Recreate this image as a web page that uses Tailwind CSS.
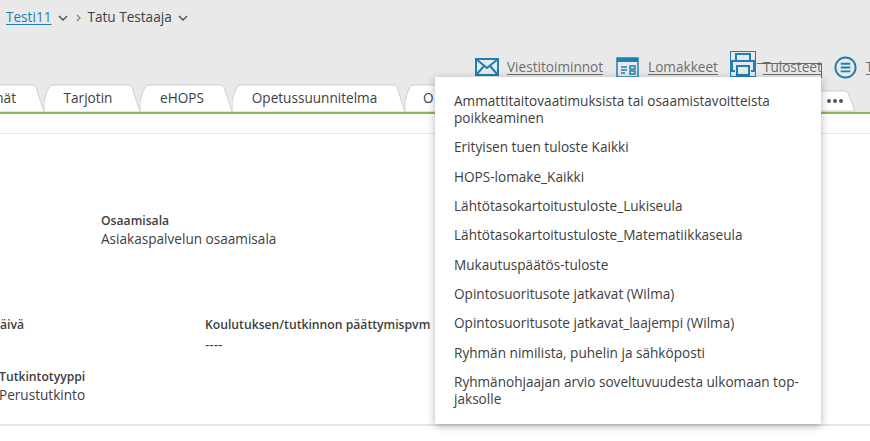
<!DOCTYPE html>
<html lang="fi">
<head>
  <meta charset="UTF-8">
  <title>Tulosteet</title>
  <script src="https://cdn.jsdelivr.net/npm/@tailwindcss/browser@4"></script>
</head>
<body class="w-[870px] h-[441px] overflow-hidden bg-white font-['Open_Sans',sans-serif] text-[13.6px] text-[#404040]">
<div class="relative w-[870px] h-[441px] overflow-hidden">

  <!-- header -->
  <div class="h-[112px] bg-[#e9e9e9] flex flex-col">
    <div class="h-[35px] pl-[6px] flex items-center">
      <a class="text-[#1f7fb0] underline underline-offset-2">Testi11</a>
      <svg class="ml-[7px] w-[10px] h-[6px]" viewBox="0 0 10 6" fill="none" stroke="#555" stroke-width="1.5"><path d="M1 1l4 4 4-4"/></svg>
      <svg class="ml-[8px] w-[5px] h-[8px]" viewBox="0 0 5 8" fill="none" stroke="#888" stroke-width="1.3"><path d="M1 1l3 3-3 3"/></svg>
      <span class="ml-[6px]">Tatu Testaaja</span>
      <svg class="ml-[6px] w-[10px] h-[6px]" viewBox="0 0 10 6" fill="none" stroke="#555" stroke-width="1.5"><path d="M1 1l4 4 4-4"/></svg>
    </div>

    <div class="h-[49px] flex items-end pl-[475px] whitespace-nowrap text-[#6e6e6e]">
      <div class="flex items-center h-[30px] mb-[2px]">
        <svg class="w-[24px] h-[20px]" viewBox="0 0 24 20" fill="none" stroke="#1f7fb0" stroke-width="2"><rect x="1" y="2" width="22" height="16"/><path d="M1 2l11 9 11-9M1 18l8-9M23 18l-8-9"/></svg>
        <span class="ml-[8px] underline underline-offset-2">Viestitoiminnot</span>
        <svg class="ml-[13px] w-[23px] h-[21px]" viewBox="0 0 23 21" fill="none" stroke="#1f7fb0" stroke-width="1.5"><rect x="1" y="1" width="21" height="19"/><path d="M1 3h21" stroke-width="4"/><path d="M5 10h6M5 13h6M5 16h4"/><rect x="14" y="9" width="5" height="3"/><rect x="14" y="14" width="5" height="3"/></svg>
        <span class="ml-[9px] underline underline-offset-2">Lomakkeet</span>
        <svg class="ml-[12px] w-[26px] h-[26px] -mt-[6px]" viewBox="0 0 26 26" fill="none" stroke="#1f7fb0" stroke-width="2"><rect x="0.5" y="0.5" width="25" height="25" stroke-width="1"/><path d="M6 9V3h14v6M5 20H2V10h22v10h-3"/><path d="M7 15h12v9H7z"/></svg>
        <span class="ml-[7px] underline underline-offset-2">Tulosteet</span>
        <svg class="ml-[12px] w-[23px] h-[23px]" viewBox="0 0 24 24" fill="none" stroke="#1f7fb0" stroke-width="2"><circle cx="12" cy="12" r="10.5"/><path d="M7 8h10M7 12h10M7 16h10"/></svg>
        <span class="ml-[9px] underline underline-offset-2">T</span>
      </div>
    </div>

    <!-- tabs -->
    <div class="h-[28px] flex -ml-[52px]">
      <div class="relative w-[96px] flex items-center justify-end pr-[28px] pt-[1px]">
        <svg class="absolute inset-0" width="96" height="28" viewBox="0 0 96 28"><path d="M0 28 V18 Q2 8 5 3 Q6 1 9 1 H84 Q87 1 88 3 L96 28Z" fill="#fff" stroke="#cfcfcf"/></svg>
        <span class="relative">nät</span>
      </div>
      <div class="relative w-[96px] flex items-center justify-center pr-[8px] pt-[1px]">
        <svg class="absolute inset-0" width="96" height="28" viewBox="0 0 96 28"><path d="M0 28 V18 Q2 8 5 3 Q6 1 9 1 H84 Q87 1 88 3 L96 28Z" fill="#fff" stroke="#cfcfcf"/></svg>
        <span class="relative">Tarjotin</span>
      </div>
      <div class="relative w-[92px] flex items-center justify-center pr-[8px] pt-[1px]">
        <svg class="absolute inset-0" width="92" height="28" viewBox="0 0 92 28"><path d="M0 28 V18 Q2 8 5 3 Q6 1 9 1 H80 Q83 1 84 3 L92 28Z" fill="#fff" stroke="#cfcfcf"/></svg>
        <span class="relative">eHOPS</span>
      </div>
      <div class="relative w-[173px] flex items-center justify-center pr-[8px] pt-[1px]">
        <svg class="absolute inset-0" width="173" height="28" viewBox="0 0 173 28"><path d="M0 28 V18 Q2 8 5 3 Q6 1 9 1 H161 Q164 1 165 3 L173 28Z" fill="#fff" stroke="#cfcfcf"/></svg>
        <span class="relative">Opetussuunnitelma</span>
      </div>
      <div class="relative w-[415px] flex items-center pl-[18px] pt-[1px]">
        <svg class="absolute inset-0" width="415" height="28" viewBox="0 0 415 28"><path d="M0 28 V18 Q2 8 5 3 Q6 1 9 1 H415 V28Z" fill="#fff" stroke="#cfcfcf"/></svg>
        <span class="relative">O</span>
      </div>
      <div class="relative w-[36px] flex items-center justify-center">
        <svg class="absolute inset-0" width="36" height="28" viewBox="0 0 36 28"><path d="M0 7 H24 Q27 7 28 9 L35 27 H0Z" fill="#fff" stroke="#cfcfcf"/></svg>
        <span class="relative flex gap-[2px] pt-[6px] pr-[6px]"><i class="w-[4px] h-[4px] rounded-full bg-[#555]"></i><i class="w-[4px] h-[4px] rounded-full bg-[#555]"></i><i class="w-[4px] h-[4px] rounded-full bg-[#555]"></i></span>
      </div>
    </div>
  </div>

  <!-- page content -->
  <div class="h-[2px] bg-[#8cb85c]"></div>
  <div class="h-[20px] border-b border-[#e8e8e8]"></div>
  <div class="h-[292px] border-b-2 border-[#e4e4e4]">
    <div class="pt-[78px] pl-[101px]">
      <div class="font-semibold text-[12.2px] leading-[17px]">Osaamisala</div>
      <div class="leading-[20px]">Asiakaspalvelun osaamisala</div>
    </div>
    <div class="mt-[67px] flex">
      <div class="w-[205px] pr-[181px] flex justify-end font-semibold text-[12.2px] leading-[18px]">äivä</div>
      <div>
        <div class="font-semibold text-[12.2px] leading-[18px]">Koulutuksen/tutkinnon päättymispvm</div>
        <div class="leading-[20px] mt-[1px]">----</div>
      </div>
    </div>
    <div class="mt-[13px] -ml-[1px]">
      <div class="font-semibold text-[12.2px] leading-[17px]">Tutkintotyyppi</div>
      <div class="leading-[20px]">Perustutkinto</div>
    </div>
  </div>

  <!-- tulosteet dropdown -->
  <div class="absolute left-[757px] top-[63px] w-[65px] h-[15px] border-t border-r border-[#1f7fb0]"></div>
  <ul class="absolute left-[435px] top-[77px] w-[386px] h-[347px] bg-white shadow-[0_2px_8px_rgba(0,0,0,0.3)] pt-[15px] pl-[19px] pr-[18px] leading-[17px] flex flex-col gap-[12.35px]">
    <li>Ammattitaitovaatimuksista tai osaamistavoitteista poikkeaminen</li>
    <li>Erityisen tuen tuloste Kaikki</li>
    <li>HOPS-lomake_Kaikki</li>
    <li>Lähtötasokartoitustuloste_Lukiseula</li>
    <li>Lähtötasokartoitustuloste_Matematiikkaseula</li>
    <li>Mukautuspäätös-tuloste</li>
    <li>Opintosuoritusote jatkavat (Wilma)</li>
    <li>Opintosuoritusote jatkavat_laajempi (Wilma)</li>
    <li>Ryhmän nimilista, puhelin ja sähköposti</li>
    <li>Ryhmänohjaajan arvio soveltuvuudesta ulkomaan top-jaksolle</li>
  </ul>
</div>
</body>
</html>
